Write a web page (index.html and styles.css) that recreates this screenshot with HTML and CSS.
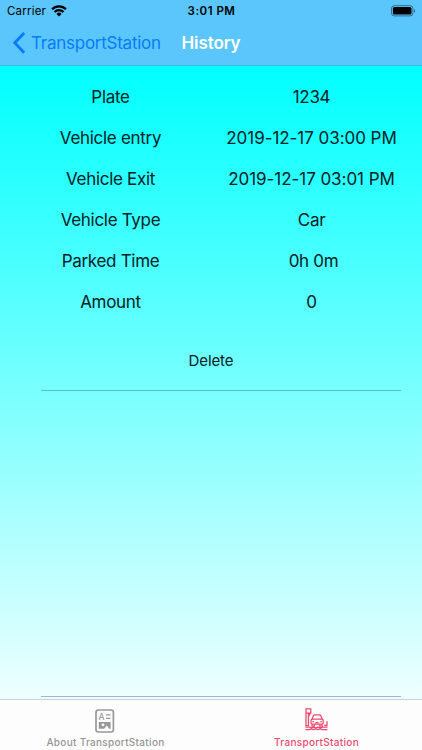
FILE: index.html
```html
<!DOCTYPE html>
<html lang="en">
<head>
  <meta charset="UTF-8" />
  <meta name="viewport" content="width=device-width, initial-scale=1.0"/>
  <title>History</title>
  <link rel="stylesheet" href="styles.css">
</head>
<body>
  <header>
    <div class="status-bar">
      <div class="carrier">
        <span>Carrier</span>
        <svg width="16" height="12" viewBox="0 0 16 12" fill="none" stroke="#000" stroke-width="2.3">
          <path d="M1.1 4.3a9.8 9.8 0 0 1 13.8 0"/>
          <path d="M3.5 7a6.4 6.4 0 0 1 9 0"/>
          <path d="M5.5 8.9a3.5 3.5 0 0 1 5 0L8 11.5z" fill="#000" stroke="none"/>
        </svg>
      </div>
      <div class="clock">3:01 PM</div>
      <svg class="battery" width="26" height="12" viewBox="0 0 26 12">
        <rect x="1.5" y=".7" width="21.4" height="10.2" rx="2.8" fill="none" stroke="#000" stroke-opacity=".45"/>
        <rect x="2.9" y="2.1" width="18.6" height="7.4" rx="1.5"/>
        <path d="M24 4.2c1.6.6 1.6 2.8 0 3.4z" fill-opacity=".5"/>
      </svg>
    </div>
    <nav class="nav-bar">
      <a class="back">
        <svg width="13" height="22" viewBox="0 0 13 22" fill="none" stroke="#0a7bf8" stroke-width="2.9">
          <path d="M12.2.9L2.8 10.8l9.4 9.9"/>
        </svg>
        <span>TransportStation</span>
      </a>
      <h1>History</h1>
    </nav>
  </header>

  <main>
    <div class="details">
      <div>Plate</div>
      <div>1234</div>
      <div>Vehicle entry</div>
      <div class="date">2019-12-17 03:00 PM</div>
      <div>Vehicle Exit</div>
      <div class="date">2019-12-17 03:01 PM</div>
      <div>Vehicle Type</div>
      <div>Car</div>
      <div>Parked Time</div>
      <div class="duration">0h 0m</div>
      <div>Amount</div>
      <div>0</div>
    </div>
    <button class="delete">Delete</button>
    <div class="separators"></div>
  </main>

  <footer class="tab-bar">
    <a class="tab">
      <svg width="20" height="24" viewBox="0 0 20 24" fill="none" stroke="#999">
        <rect x="1" y="1" width="17.4" height="22" rx="2.4" stroke-width="1.7"/>
        <text x="3.6" y="11" class="icon-letter">A</text>
        <path d="M11 5.9h4.4M11 9.3h4.4" stroke-width="1.2"/>
        <path fill="#999" fill-rule="evenodd" stroke="none" d="M3.8 13h11.8v6.8h-1.4l-2.4-3.2-2.6 3.2H3.8zM8 14.4a1.4 1.4 0 1 0 0 2.8 1.4 1.4 0 0 0 0-2.8z"/>
      </svg>
      <span>About TransportStation</span>
    </a>
    <a class="tab active">
      <svg width="23" height="24" viewBox="0 0 23 24" fill="none" stroke="#ed4a6e" stroke-width="1.25">
        <path d="M1 17.6V.9h4.8v4.3H3.4v12.4zM1 5.2h2.4M5.8 4L3.6 8.4"/>
        <path d="M6.8 11.4l1.5-3.5c.3-.7.8-1 1.6-1h4.4c.8 0 1.3.3 1.6 1l1.5 3.5"/>
        <rect x="6" y="11.2" width="12.2" height="5" rx="1.4"/>
        <path d="M7 16.2v1.8h2.4v-1.8M14.8 16.2v1.8h2.4v-1.8M7.4 13.5H9M15.2 13.5h1.6M10.4 14.6h3.4"/>
        <path d="M19.2 17.4h2.8v-4.2"/>
        <path d="M.4 19.1h4.4l1.5.8 2.1-.8 2.4.8 2.2-.8 2.3.8 2.2-.8h5M.4 21.7h4l1.9-.8 2.1.8 2.4-.8 2.2.8 2.3-.8 2.2.8h5"/>
      </svg>
      <span>TransportStation</span>
    </a>
  </footer>
</body>
</html>
```

FILE: styles.css
```css
* {
  box-sizing: border-box;
}
body {
  margin: 0;
  height: 750px;
  display: flex;
  flex-direction: column;
  overflow: hidden;
  font-family: Inter, "Liberation Sans", sans-serif;
  color: #06201f;
}
header {
  height: 66px;
  background: #5ac6fb;
  border-bottom: 1px solid #3db9ea;
}
.status-bar {
  height: 22px;
  padding: 0 6px 0 7px;
  display: grid;
  grid-template-columns: 1fr auto 1fr;
  align-items: center;
  font-size: 11.5px;
  color: #000;
}
.carrier {
  display: flex;
  align-items: center;
  gap: 5px;
  letter-spacing: 0.2px;
}
.clock {
  font-weight: 600;
  letter-spacing: 0.5px;
}
.battery {
  justify-self: end;
}
.nav-bar {
  height: 42px;
  padding: 0 12px;
  display: grid;
  grid-template-columns: 1fr auto 1fr;
  align-items: center;
}
.back {
  display: flex;
  align-items: center;
  gap: 6px;
  font-size: 17px;
  letter-spacing: -0.25px;
  color: #0a7bf8;
}
h1 {
  margin: 0;
  font-size: 17px;
  font-weight: 600;
  letter-spacing: -0.1px;
  color: #fff;
}
main {
  flex: 1;
  padding-top: 10px;
  display: flex;
  flex-direction: column;
  background: linear-gradient(#00ffff, #eeffff);
}
.details {
  padding: 0 20px;
  display: grid;
  grid-template-columns: 1fr 1fr;
  grid-auto-rows: 41px;
  column-gap: 20px;
  align-items: center;
  text-align: center;
  font-size: 17px;
  letter-spacing: -0.3px;
  white-space: nowrap;
}
.details .date {
  letter-spacing: -0.05px;
}
.details .duration {
  padding-left: 4px;
}
.delete {
  height: 68px;
  padding: 8px 0 0;
  border: 0;
  background: none;
  font: inherit;
  font-size: 15px;
  letter-spacing: -0.1px;
  color: #06201f;
}
.separators {
  flex: 1;
  margin: 0 21px 2px 41px;
  border-top: 1px solid #5ab9dc;
  border-bottom: 1px solid #9fb6d6;
}
.tab-bar {
  height: 51px;
  display: grid;
  grid-template-columns: 1fr 1fr;
  background: #fdfdfd;
  border-top: 1px solid #bfd6d8;
}
.tab {
  padding-top: 9px;
  display: flex;
  flex-direction: column;
  align-items: center;
  gap: 3px;
  font-size: 10px;
  font-weight: 500;
  letter-spacing: 0.3px;
  color: #959595;
}
.tab svg {
  margin-left: -1px;
}
.active {
  color: #ed4a6e;
}
.active svg {
  margin-top: -1px;
  margin-bottom: 1px;
}
.icon-letter {
  font-size: 8.5px;
  fill: #999;
  stroke: none;
}
```
